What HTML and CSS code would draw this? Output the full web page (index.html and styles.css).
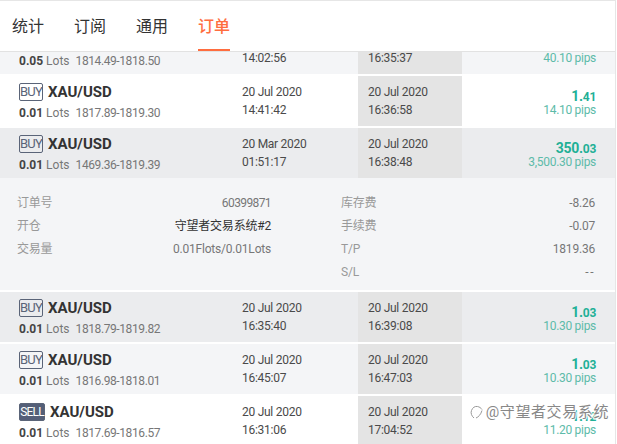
FILE: index.html
```html
<!DOCTYPE html>
<html>

	<head>
		<meta charset="UTF-8">
		<title>订单</title>
		<link rel="stylesheet" href="styles.css">
	</head>

	<body>
		<div class="panel">
			<ul class="tabs">
				<li>统计</li>
				<li>订阅</li>
				<li>通用</li>
				<li class="active">订单</li>
			</ul>

			<div class="list">
				<div class="row row-first">
					<div class="info">
						<div class="pair"><span class="tag">BUY</span><b>XAU/USD</b></div>
						<p class="lots"><b>0.05</b> Lots <span>1814.49-1818.50</span></p>
					</div>
					<div class="open-time"><p>20 Jul 2020</p><p>14:02:56</p></div>
					<div class="close-time"><p>20 Jul 2020</p><p>16:35:37</p></div>
					<div class="profit"><strong>4.<i>01</i></strong><span>40.10 pips</span></div>
				</div>

				<div class="row row-white">
					<div class="info">
						<div class="pair"><span class="tag">BUY</span><b>XAU/USD</b></div>
						<p class="lots"><b>0.01</b> Lots <span>1817.89-1819.30</span></p>
					</div>
					<div class="open-time"><p>20 Jul 2020</p><p>14:41:42</p></div>
					<div class="close-time"><p>20 Jul 2020</p><p>16:36:58</p></div>
					<div class="profit"><strong>1.<i>41</i></strong><span>14.10 pips</span></div>
				</div>

				<div class="row row-open">
					<div class="info">
						<div class="pair"><span class="tag">BUY</span><b>XAU/USD</b></div>
						<p class="lots"><b>0.01</b> Lots <span>1469.36-1819.39</span></p>
					</div>
					<div class="open-time"><p>20 Mar 2020</p><p>01:51:17</p></div>
					<div class="close-time"><p>20 Jul 2020</p><p>16:38:48</p></div>
					<div class="profit"><strong>350.<i>03</i></strong><span>3,500.30 pips</span></div>
				</div>

				<div class="detail">
					<dl class="detail-col">
						<div><dt>订单号</dt><dd class="num">60399871</dd></div>
						<div><dt>开仓</dt><dd class="dark">守望者交易系统#2</dd></div>
						<div><dt>交易量</dt><dd>0.01Flots/0.01Lots</dd></div>
					</dl>
					<dl class="detail-col">
						<div><dt>库存费</dt><dd>-8.26</dd></div>
						<div><dt>手续费</dt><dd>-0.07</dd></div>
						<div><dt>T/P</dt><dd>1819.36</dd></div>
						<div><dt>S/L</dt><dd class="dashes">--</dd></div>
					</dl>
				</div>

				<div class="row row-open">
					<div class="info">
						<div class="pair"><span class="tag">BUY</span><b>XAU/USD</b></div>
						<p class="lots"><b>0.01</b> Lots <span>1818.79-1819.82</span></p>
					</div>
					<div class="open-time"><p>20 Jul 2020</p><p>16:35:40</p></div>
					<div class="close-time"><p>20 Jul 2020</p><p>16:39:08</p></div>
					<div class="profit"><strong>1.<i>03</i></strong><span>10.30 pips</span></div>
				</div>

				<div class="row">
					<div class="info">
						<div class="pair"><span class="tag">BUY</span><b>XAU/USD</b></div>
						<p class="lots"><b>0.01</b> Lots <span>1816.98-1818.01</span></p>
					</div>
					<div class="open-time"><p>20 Jul 2020</p><p>16:45:07</p></div>
					<div class="close-time"><p>20 Jul 2020</p><p>16:47:03</p></div>
					<div class="profit"><strong>1.<i>03</i></strong><span>10.30 pips</span></div>
				</div>

				<div class="row row-white">
					<div class="info">
						<div class="pair"><span class="tag tag-sell">SELL</span><b>XAU/USD</b></div>
						<p class="lots"><b>0.01</b> Lots <span>1817.69-1816.57</span></p>
					</div>
					<div class="open-time"><p>20 Jul 2020</p><p>16:31:06</p></div>
					<div class="close-time"><p>20 Jul 2020</p><p>17:04:52</p></div>
					<div class="profit"><strong>1.<i>12</i></strong><span>11.20 pips</span></div>
				</div>
			</div>

			<div class="watermark">
				<svg width="14" height="16" viewBox="0 0 14 16"><path d="M4 15C1.500 13 .5 10 1.500 7.500 2.500 4.500 5 3 7.500 3.500c2 .4 3.500 1.500 4.500 3M6 15c2.500-1 4.800-3.500 6-7.500" fill="none" stroke="#999" stroke-width="1"/></svg>
				<span>@守望者交易系统</span>
			</div>
		</div>
	</body>

</html>
```

FILE: styles.css
```css
* {
	margin: 0;
	padding: 0;
	box-sizing: border-box;
}

html, body {
	height: 100%;
	overflow: hidden;
	background-color: #fff;
}

body {
	font-family: Roboto, "Noto Sans CJK SC", sans-serif;
	font-size: 12px;
	color: #4a4a4a;
}

.panel {
	position: relative;
	width: 616px;
	height: 444px;
	border-top: 1px solid #e6e6e6;
	border-right: 1px solid #e6e6e6;
	overflow: hidden;
}

.tabs {
	position: relative;
	z-index: 1;
	display: flex;
	gap: 30px;
	height: 51px;
	padding-left: 12px;
	list-style: none;
	background-color: #fff;
	border-bottom: 1px solid #e2e2e2;
}

.tabs li {
	height: 50px;
	font-size: 16px;
	line-height: 52px;
	color: #333;
}

.tabs .active {
	color: #ff6d3f;
	font-weight: 500;
	border-bottom: 2px solid #ff6d3f;
}

.list {
	margin-top: -28px;
}

.row {
	display: flex;
	height: 50px;
	background-color: #f4f5f7;
	margin-bottom: 2px;
}

.row-first {
	margin-bottom: 0;
}

.row-white {
	background-color: #fff;
	margin-top: 2px;
}

.row-open {
	background-color: #ebecee;
}

.row-open + .detail {
	margin-top: -2px;
}

.info {
	width: 242px;
	padding: 7px 0 0 19px;
}

.pair {
	display: flex;
	align-items: center;
	gap: 5px;
	height: 18px;
}

.pair b {
	font-size: 15px;
	font-weight: 700;
	color: #333;
}

.tag {
	width: 24px;
	height: 18px;
	font-size: 13px;
	line-height: 16px;
	text-align: center;
	color: #5a6478;
	border: 1px solid #5a6478;
	border-radius: 2px;
	letter-spacing: -0.8px;
}

.tag-sell {
	width: 26px;
	font-size: 12px;
	color: #fff;
	background-color: #545f78;
}

.lots {
	margin-top: 4px;
	line-height: 16px;
	color: #777;
}

.lots b {
	color: #444;
	font-weight: 700;
}

.lots span {
	margin-left: 3px;
	letter-spacing: -0.4px;
}

.open-time, .close-time {
	line-height: 18px;
	color: #4a4a4a;
	padding-top: 7px;
	letter-spacing: -0.27px;
}

.open-time {
	width: 116px;
}

.close-time {
	width: 104px;
	padding-left: 10px;
	background-color: #e4e4e4;
}

.profit {
	flex: 1;
	display: flex;
	flex-direction: column;
	align-items: flex-end;
	justify-content: center;
	padding-right: 19px;
	padding-top: 5px;
	line-height: 13px;
	color: #5dbba9;
	letter-spacing: -0.3px;
}

.profit strong {
	font-size: 14px;
	color: #1fb096;
}

.profit i {
	font-style: normal;
	font-size: 12px;
}

.detail {
	display: flex;
	gap: 70px;
	height: 112px;
	margin-bottom: 2px;
	padding: 16px 0 0 17px;
	background-color: #f4f5f7;
}

.detail-col {
	flex: none;
	width: 254px;
	letter-spacing: -0.2px;
}

.detail-col div {
	display: flex;
	justify-content: space-between;
	height: 23px;
	line-height: 18px;
}

.detail-col dt {
	color: #999;
}

.detail-col dd {
	color: #777;
}

.detail-col .dark {
	color: #333;
}

.detail-col .num {
	letter-spacing: -0.6px;
}

.detail-col .dashes {
	letter-spacing: 1.5px;
}

.watermark {
	position: absolute;
	right: 6px;
	bottom: 23px;
	display: flex;
	align-items: center;
	gap: 2px;
	font-size: 15px;
	letter-spacing: 0.6px;
	color: #888;
	text-shadow: 0 0 2px #fff, 0 0 2px #fff, 1px 0 1px #fff, -1px 0 1px #fff, 0 1px 1px #fff, 0 -1px 1px #fff;
}
```
